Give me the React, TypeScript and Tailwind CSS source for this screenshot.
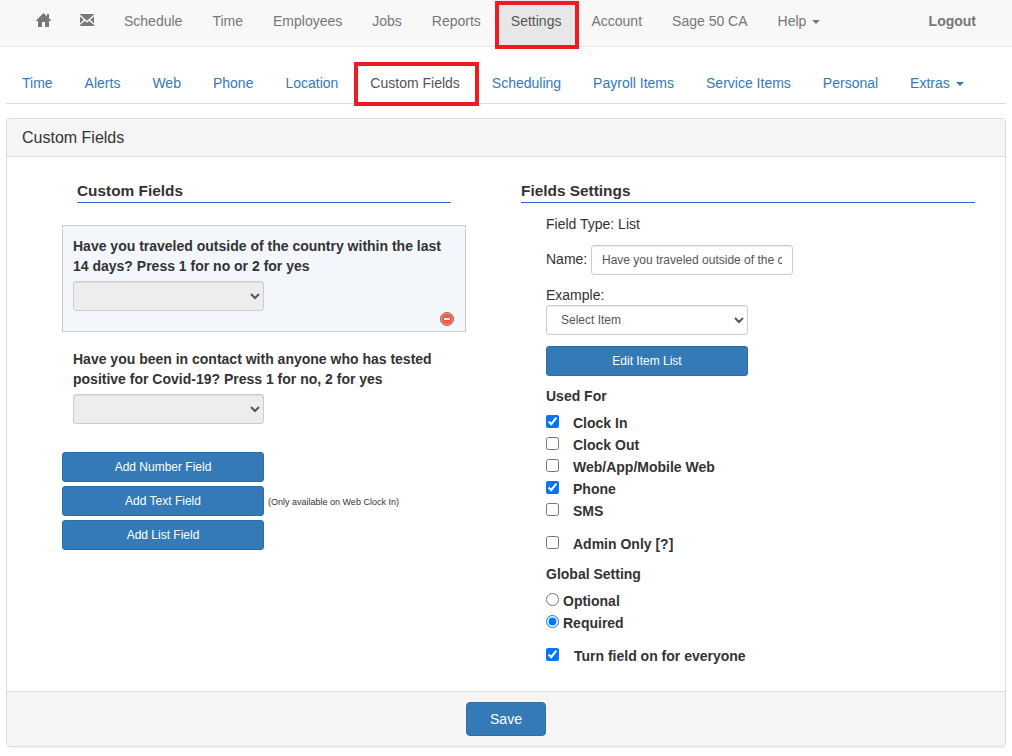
import React, { useState } from "react";

interface CustomField {
  id: number;
  question: string;
}

const navItems = ["Schedule", "Time", "Employees", "Jobs", "Reports", "Settings", "Account", "Sage 50 CA"];

const tabs = [
  "Time",
  "Alerts",
  "Web",
  "Phone",
  "Location",
  "Custom Fields",
  "Scheduling",
  "Payroll Items",
  "Service Items",
  "Personal",
];

const fields: CustomField[] = [
  { id: 1, question: "Have you traveled outside of the country within the last 14 days? Press 1 for no or 2 for yes" },
  { id: 2, question: "Have you been in contact with anyone who has tested positive for Covid-19? Press 1 for no, 2 for yes" },
];

const usedForOptions = ["Clock In", "Clock Out", "Web/App/Mobile Web", "Phone", "SMS"];

const HomeIcon = () => (
  <svg width="15" height="14" viewBox="0 0 15 14" fill="currentColor">
    <path d="M7.5 0 L11 3.4 V1 H13 V5.3 L15 7.4 V8 H13 V14 H9 V9 H6 V14 H2 V8 H0 V7.4 Z" />
  </svg>
);

const EnvelopeIcon = () => (
  <svg width="14" height="12" viewBox="0 0 14 12" fill="currentColor">
    <path d="M0 0 H14 V0.6 L7 6.8 L0 0.6 Z" />
    <path d="M0 2.4 L3.7 5.8 L0 9.4 Z" />
    <path d="M14 2.4 L10.3 5.8 L14 9.4 Z" />
    <path d="M0 12 V11.1 L4.9 6.9 L7 8.8 L9.1 6.9 L14 11.1 V12 Z" />
  </svg>
);

const RemoveIcon = () => (
  <svg width="14" height="14" viewBox="0 0 14 14">
    <circle cx="7" cy="7" r="6.5" fill="#ea5a4c" stroke="#d2564a" />
    <circle cx="7" cy="7" r="5.5" fill="none" stroke="#f29a8e" strokeWidth="0.8" />
    <rect x="4" y="6" width="6" height="2" fill="#fff" />
  </svg>
);

const Caret = () => (
  <span className="ml-1.5 inline-block border-x-4 border-t-4 border-x-transparent border-t-current align-middle" />
);

const CustomFieldsPage: React.FC = () => {
  const [selected, setSelected] = useState(1);
  const [name, setName] = useState(fields[0].question);
  const [usedFor, setUsedFor] = useState<string[]>(["Clock In", "Phone"]);
  const [adminOnly, setAdminOnly] = useState(false);
  const [globalSetting, setGlobalSetting] = useState("Required");
  const [everyone, setEveryone] = useState(true);

  const toggleUsedFor = (option: string) => {
    setUsedFor(u => (u.includes(option) ? u.filter(o => o !== option) : [...u, option]));
  };

  const handleSelect = (field: CustomField) => {
    setSelected(field.id);
    setName(field.question);
  };

  const blueButton =
    "block h-[30px] w-[202px] rounded-[3px] border border-[#2e6da4] bg-[#337ab7] text-xs leading-[18px] text-white";
  const control =
    "h-[30px] rounded-[3px] border border-[#ccc] text-xs text-[#555] shadow-[inset_0_1px_1px_rgba(0,0,0,0.075)] outline-none";
  const heading = "h-[23px] border-b border-[#3366cc] pt-px text-[15.4px] leading-5 font-bold";

  return (
    <div className="h-[756px] overflow-hidden bg-white font-['Liberation_Sans',Arial,sans-serif] text-sm leading-5 text-[#333]">
      <nav className="flex h-[47px] border-b border-[#e7e7e7] bg-[#f8f8f8] pl-[21px] text-[#777]">
        <a className="px-[15px] pt-[13px]"><HomeIcon /></a>
        <a className="pt-[14px] pr-[15px] pl-[14px]"><EnvelopeIcon /></a>
        {navItems.map(item =>
          item === "Settings" ? (
            <a key={item} className="relative bg-[#e7e7e7] px-[15px] pt-[11px] text-[#555]">
              {item}
              <span className="absolute top-px -right-[3px] -left-px h-12 border-4 border-[#ed1c24]" />
            </a>
          ) : (
            <a key={item} className="px-[15px] pt-[11px]">{item}</a>
          )
        )}
        <a className="px-[15px] pt-[11px]">Help<Caret /></a>
        <a className="mr-9 ml-auto pt-[11px] font-bold">Logout</a>
      </nav>

      <div className="mx-1.5 mt-[15px] flex h-[42px] border-b border-[#ddd] text-[#337ab7]">
        {tabs.map(tab =>
          tab === "Custom Fields" ? (
            <a key={tab} className="relative px-4 pt-[11px] text-[#555]">
              {tab}
              <span className="absolute top-0 -right-[3px] left-0 h-11 border-4 border-[#ed1c24]" />
            </a>
          ) : (
            <a key={tab} className="px-4 pt-[11px]">{tab}</a>
          )
        )}
        <a className="px-4 pt-[11px]">Extras<Caret /></a>
      </div>

      <div className="mx-1.5 mt-3.5 h-[629px] rounded border border-[#ddd] shadow-[0_1px_1px_rgba(0,0,0,0.05)]">
        <h3 className="h-[38px] rounded-t-[3px] border-b border-[#ddd] bg-[#f5f5f5] px-[15px] pt-[9px] text-base leading-5">
          Custom Fields
        </h3>

        <div className="flex h-[534px] pt-[23px] pl-[55px]">
          <div className="w-[404px]">
            <h4 className={`ml-[15px] w-[374px] ${heading}`}>Custom Fields</h4>
            <div className="mt-[22px] space-y-1.5">
              {fields.map(field => (
                <div
                  key={field.id}
                  onClick={() => handleSelect(field)}
                  className={`h-[107px] border p-2.5 ${selected === field.id ? "border-[#ccc] bg-[#f3f6fb]" : "border-transparent"}`}
                >
                  <div className="font-bold">{field.question}</div>
                  <select className={`mt-[5px] block w-[191px] bg-[#ededed] pr-px ${control}`} />
                  {selected === field.id && (
                    <div className="mt-px mr-px flex justify-end"><RemoveIcon /></div>
                  )}
                </div>
              ))}
            </div>
            <div className="mt-[7px] space-y-1">
              <button className={blueButton}>Add Number Field</button>
              <div className="flex items-center gap-1">
                <button className={blueButton}>Add Text Field</button>
                <span className="pt-0.5 text-[9px]">(Only available on Web Clock In)</span>
              </div>
              <button className={blueButton}>Add List Field</button>
            </div>
          </div>

          <div className="ml-[55px] w-[454px]">
            <h4 className={heading}>Fields Settings</h4>
            <div className="pt-[11px] pl-[25px]">
              <div>Field Type: List</div>
              <div className="mt-[11px] flex items-center">
                <label className="w-[45px] pb-0.5">Name:</label>
                <input
                  className={`w-[202px] bg-white px-2.5 ${control}`}
                  value={name}
                  onChange={e => setName(e.target.value)}
                />
              </div>
              <label className="mt-2.5 block">Example:</label>
              <select className={`block w-[202px] bg-white px-2.5 ${control}`}>
                <option>Select Item</option>
              </select>
              <button className={`mt-[11px] ${blueButton}`}>Edit Item List</button>

              <div className="mt-2.5 mb-[7px] font-bold">Used For</div>
              {usedForOptions.map(option => (
                <label key={option} className="flex h-[22px] gap-3.5 font-bold">
                  <input
                    type="checkbox"
                    className="mt-0.5 size-[13px]"
                    checked={usedFor.includes(option)}
                    onChange={() => toggleUsedFor(option)}
                  />
                  {option}
                </label>
              ))}
              <label className="mt-[11px] flex h-[22px] gap-3.5 font-bold">
                <input
                  type="checkbox"
                  className="mt-0.5 size-[13px]"
                  checked={adminOnly}
                  onChange={e => setAdminOnly(e.target.checked)}
                />
                Admin Only [?]
              </label>

              <div className="mt-2 mb-[7px] font-bold">Global Setting</div>
              {["Optional", "Required"].map(option => (
                <label key={option} className="flex h-[22px] gap-1 font-bold">
                  <input
                    type="radio"
                    className="mt-0.5 size-[13px]"
                    checked={globalSetting === option}
                    onChange={() => setGlobalSetting(option)}
                  />
                  {option}
                </label>
              ))}
              <label className="mt-[11px] flex h-[22px] gap-[15px] font-bold">
                <input
                  type="checkbox"
                  className="mt-0.5 size-[13px]"
                  checked={everyone}
                  onChange={e => setEveryone(e.target.checked)}
                />
                Turn field on for everyone
              </label>
            </div>
          </div>
        </div>

        <div className="flex h-[55px] justify-center rounded-b-[3px] border-t border-[#ddd] bg-[#f5f5f5] pt-2.5">
          <button className="h-[34px] w-20 rounded border border-[#2e6da4] bg-[#337ab7] text-sm text-white">Save</button>
        </div>
      </div>
    </div>
  );
};

export default CustomFieldsPage;
